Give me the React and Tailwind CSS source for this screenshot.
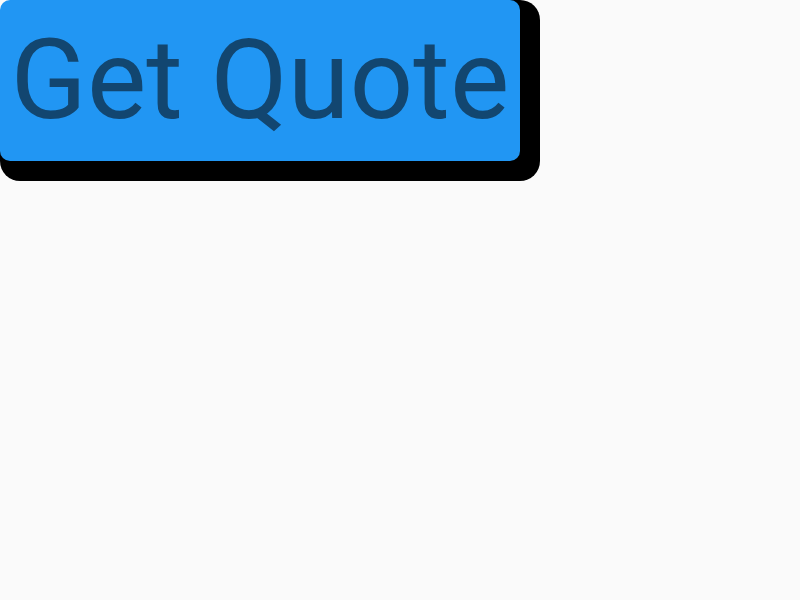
export default function App() {
  return (
    <div className="min-h-screen w-full bg-[#fafafa]" style={{ fontFamily: "Roboto, sans-serif" }}>
      <button className="flex h-[161px] w-[520px] items-center justify-center rounded-[10px] bg-[#2196f3] pb-[2px] text-[112px] leading-none text-[#124670] shadow-[10px_10px_0_10px_#000] font-['Roboto',sans-serif]">
        Get Quote
      </button>
    </div>
  );
}
